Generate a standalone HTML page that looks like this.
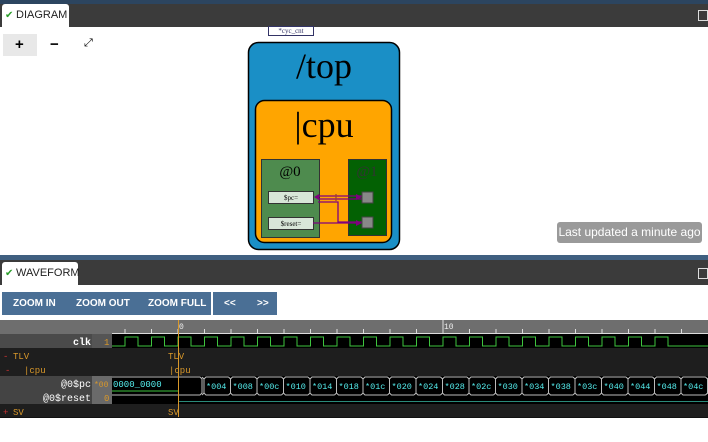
<!DOCTYPE html>
<html><head><meta charset="utf-8"><style>
*{margin:0;padding:0;box-sizing:border-box}
body{width:708px;height:442px;overflow:hidden;background:#fff;font-family:"Liberation Sans",sans-serif;position:relative}
.abs{position:absolute}
.tab{position:absolute;background:#fff;font-size:11px;color:#222;padding-left:14px;line-height:23px;border-radius:3px 3px 0 0}
.tab:before{content:"\2714";color:#2a9d2a;position:absolute;left:3px;font-size:10px}
.btn{position:absolute;top:292px;height:23px;background:#4a6f95;color:#fff;font-size:10px;font-weight:bold;line-height:23px}
.btn span{position:absolute}
</style></head><body>
<div class="abs" style="left:0;top:0;width:708px;height:4px;background:#2c4560"></div>
<div class="abs" style="left:0;top:4px;width:708px;height:23px;background:#3b3b3b"></div>
<div class="tab" style="left:2px;top:4px;width:67px;height:23px">DIAGRAM</div>
<div class="abs" style="left:698px;top:10px;width:10px;height:11px;border:1.5px solid #ddd"></div>
<div class="abs" style="left:3px;top:34px;width:34px;height:22px;background:#e8e8e8"></div>
<div class="abs" style="left:15px;top:36px;font-size:15px;font-weight:bold">+</div>
<div class="abs" style="left:50px;top:36px;font-size:15px;font-weight:bold">−</div>
<div class="abs" style="left:84px;top:37px;font-size:11px">⤢</div>
<svg class="abs" style="left:0;top:0" width="708" height="255">
<rect x="268.5" y="26.5" width="45" height="9" fill="#fff" stroke="#336"/>
<text x="291" y="33" font-size="7" text-anchor="middle" font-family="Liberation Serif" fill="#336">*cyc_cnt</text>
<rect x="248.5" y="42.5" width="151" height="207" rx="10" fill="#1a8fc6" stroke="#000" stroke-width="1.5"/>
<text x="324" y="78" font-size="36" text-anchor="middle" font-family="Liberation Serif">/top</text>
<rect x="255.5" y="100.5" width="136" height="142" rx="9" fill="#ffa500" stroke="#000" stroke-width="1.5"/>
<text x="324" y="137" font-size="36" text-anchor="middle" font-family="Liberation Serif">|cpu</text>
<rect x="261.5" y="159.5" width="58" height="78" fill="#4e8b4e" stroke="#333"/>
<text x="290" y="176" font-size="15" text-anchor="middle" font-family="Liberation Serif">@0</text>
<rect x="348.5" y="159.5" width="38" height="76" fill="#036103" stroke="#333"/>
<text x="367" y="176" font-size="15" text-anchor="middle" font-family="Liberation Serif" fill="#333">@1</text>
<rect x="268.5" y="191.5" width="45" height="12" fill="#d8e6d8" stroke="#333"/>
<text x="291" y="200" font-size="7" text-anchor="middle" font-family="Liberation Serif">$pc=</text>
<rect x="268.5" y="217.5" width="45" height="12" fill="#d8e6d8" stroke="#333"/>
<text x="291" y="226" font-size="7" text-anchor="middle" font-family="Liberation Serif">$reset=</text>
<g stroke="#800080" stroke-width="1.3" fill="none">
<path d="M318 196H362M318 199H362M318 202H338V222H362M313 223H362"/>
<path d="M336 194V201" stroke="#a04030"/>
</g>
<path d="M314 197l5-3v6z M356 194l6 3-6 3z M356 220l6 3-6 3z" fill="#800080"/>
<rect x="362" y="192" width="11" height="11" fill="#888" stroke="#444"/>
<rect x="362" y="217" width="11" height="11" fill="#888" stroke="#444"/>
</svg>
<div class="abs" style="left:557px;top:222px;width:145px;height:21px;background:#9a9a9a;border-radius:3px;color:#fff;font-size:12px;line-height:21px;text-align:center">Last updated a minute ago</div>
<div class="abs" style="left:0;top:255px;width:708px;height:5px;background:#3f5f80"></div>
<div class="abs" style="left:0;top:260px;width:708px;height:25px;background:#3b3b3b"></div>
<div class="tab" style="left:2px;top:262px;width:76px;height:23px">WAVEFORM</div>
<div class="abs" style="left:698px;top:268px;width:10px;height:11px;border:1.5px solid #ddd"></div>
<div class="btn" style="left:2px;width:209px"><span style="left:11px">ZOOM IN</span><span style="left:74px">ZOOM OUT</span><span style="left:146px">ZOOM FULL</span></div>
<div class="btn" style="left:213px;width:64px"><span style="left:11px">&lt;&lt;</span><span style="left:44px">&gt;&gt;</span></div>
<svg id="w" class="abs" style="left:0;top:320px" width="708" height="100" font-family="Liberation Mono" font-size="9"></svg>
<script>
var s='';
s+='<rect x="0" y="0" width="708" height="14" fill="#6e6e6e"/>';
s+='<line x1="112" y1="13.5" x2="708" y2="13.5" stroke="#ddd"/>';
var rows=[[14,'#2a2a2a'],[28,'#1e1e1e'],[42,'#1e1e1e'],[56,'#2a2a2a'],[70,'#2a2a2a'],[83,'#1e1e1e']];
rows.forEach(function(r){s+='<rect x="0" y="'+r[0]+'" width="708" height="14" fill="'+r[1]+'"/>';});
s+='<rect x="0" y="14" width="92" height="14" fill="#4a4a4a"/><rect x="92" y="14" width="20" height="14" fill="#555"/>';
s+='<rect x="0" y="56" width="92" height="28" fill="#444"/><rect x="92" y="56" width="20" height="28" fill="#6a6a6a"/>';
s+='<rect x="112" y="14" width="596" height="14" fill="#000"/><rect x="112" y="56" width="596" height="28" fill="#000"/>';
var p=26.5,x0=178;
for(var i=-2;i<20;i++){var x=x0+i*p;if(x>112){s+='<line x1="'+x+'" y1="9" x2="'+x+'" y2="13" stroke="#ddd"/>';}}
s+='<text x="179" y="9" fill="#eee" font-size="8">0</text><text x="444" y="9" fill="#eee" font-size="8">10</text><line x1="443" y1="0" x2="443" y2="13" stroke="#ddd"/>';
var d='M112 26';
for(var i=-3;i<21;i++){var r=x0-53+i*p+0;if(r<112)continue;d+='H'+r.toFixed(1)+'V17H'+(r+13).toFixed(1)+'V26';}
d+='H708';
s+='<path d="'+d+'" stroke="#3ec43e" fill="none"/>';
s+='<path d="M112 57H200L202 59V73L200 75H112" stroke="#bbb" fill="none"/>';
s+='<text x="113" y="67" fill="#5ee">0000_0000</text>';
var vals=['004','008','00c','010','014','018','01c','020','024','028','02c','030','034','038','03c','040','044','048','04c','050'];
for(var k=0;k<20;k++){var a=204+k*p;s+='<path d="M'+(a-2)+' 57L'+a+' 59V73L'+(a-2)+' 75M'+a+' 59L'+(a+2)+' 57H'+(a+p-2)+'M'+a+' 73L'+(a+2)+' 75H'+(a+p-2)+'" stroke="#bbb" fill="none"/>';s+='<text x="'+(a+2)+'" y="69" fill="#5ee" font-size="8.5">*'+vals[k]+'</text>';}
s+='<line x1="112" y1="71" x2="178" y2="71" stroke="#3ec43e"/><line x1="178" y1="81.5" x2="708" y2="81.5" stroke="#2a8a7a"/>';
var o='#d9982a';
s+='<text x="91" y="25" fill="#fff" text-anchor="end" font-weight="bold" font-size="10">clk</text><text x="104" y="25" fill="'+o+'">1</text>';
s+='<text x="3" y="39" fill="#c33">-</text><text x="13" y="39" fill="'+o+'">TLV</text><text x="168" y="39" fill="'+o+'">TLV</text>';
s+='<text x="5" y="53" fill="#c33">-</text><text x="24" y="53" fill="'+o+'">|cpu</text><text x="169" y="53" fill="'+o+'">|cpu</text>';
s+='<text x="91" y="67" fill="#fff" text-anchor="end" font-size="10">@0$pc</text><text x="94" y="67" fill="'+o+'" font-size="8">*00</text>';
s+='<text x="91" y="81" fill="#fff" text-anchor="end" font-size="10">@0$reset</text><text x="104" y="81" fill="'+o+'">0</text>';
s+='<text x="3" y="95" fill="#c33">+</text><text x="13" y="95" fill="'+o+'">SV</text><text x="168" y="95" fill="'+o+'">SV</text>';
s+='<line x1="178.5" y1="0" x2="178.5" y2="97" stroke="#d9982a"/>';
s+='<line x1="0" y1="97.5" x2="708" y2="97.5" stroke="#111"/>';
document.getElementById('w').innerHTML=s;
</script>
</body></html>
